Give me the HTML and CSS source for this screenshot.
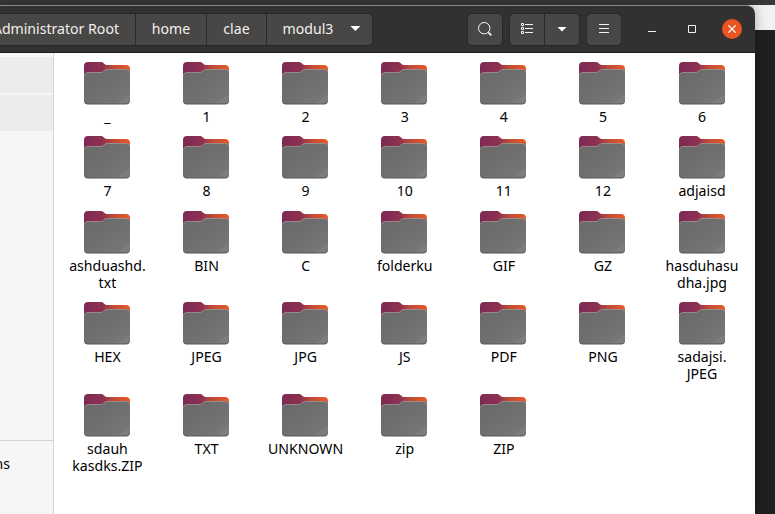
FILE: index.html
```
<!DOCTYPE html>
<html lang="en">
<head>
<meta charset="utf-8">
<title>modul3</title>
<link rel="stylesheet" href="styles.css">
</head>
<body>
<svg class="defs" aria-hidden="true">
  <defs>
    <linearGradient id="back" x1="0" y1="0" x2="1" y2="0">
      <stop offset="0" stop-color="#7c2a55"/><stop offset=".42" stop-color="#8f3150"/><stop offset=".62" stop-color="#bd4a38"/><stop offset="1" stop-color="#e95a26"/>
    </linearGradient>
    <linearGradient id="front" x1="0" y1="0" x2="1" y2="1">
      <stop offset="0" stop-color="#696969"/><stop offset=".5" stop-color="#6f6f6f"/><stop offset=".86" stop-color="#767676"/><stop offset=".87" stop-color="#7e7e7e"/><stop offset="1" stop-color="#7a7a7a"/>
    </linearGradient>
    <symbol id="folder" viewBox="0 0 46 43">
      <path fill="url(#back)" d="M4 0H17.500C19.500 0 20.500 3 22.500 3H42Q46 3 46 7V20H0V4Q0 0 4 0Z"/>
      <path fill="#555" d="M0 14.500Q0 10.500 4 10.500H17C19.500 10.500 20 7.500 23 7.500H42.500Q46 7.500 46 11V38.500Q46 42.500 42 42.500H4Q0 42.500 0 38.500Z"/>
      <path fill="url(#front)" d="M0 14.500Q0 10.500 4 10.500H17C19.500 10.500 20 7.500 23 7.500H42.500Q46 7.500 46 11V37.500Q46 41.500 42 41.500H4Q0 41.500 0 37.500Z"/>
      <path fill="none" stroke="#a39696" stroke-width=".8" d="M.4 13.500Q.8 10.500 4 10.500H17C19.500 10.500 20 7.500 23 7.500H42.500Q45.200 7.500 45.600 10"/>
    </symbol>
  </defs>
</svg>
<div class="window">
  <header class="titlebar">
    <nav class="path">
      <span class="crumb root">Administrator Root</span>
      <span class="crumb home">home</span>
      <span class="crumb clae">clae</span>
      <span class="crumb current">modul3 <i class="caret"></i></span>
    </nav>
    <div class="tools">
      <span class="button"><svg width="16" height="16" viewBox="0 0 16 16"><circle cx="7.200" cy="7.200" r="5.700"/><path stroke-width="1.800" d="M11.300 11.300L14.300 14.300"/></svg></span>
      <div class="group">
        <span class="button"><svg width="16" height="16" viewBox="0 0 16 16"><path d="M2.500 2.500h2v2h-2zM2.500 6.500h2v2h-2zM2.500 10.500h2v2h-2zM6 3.500h8M6 7.500h8M6 11.500h8"/></svg></span>
        <span class="button"><i class="caret"></i></span>
      </div>
      <span class="button"><svg width="16" height="16" viewBox="0 0 16 16"><path d="M3 3.500h10M3 7.500h10M3 11.500h10"/></svg></span>
    </div>
    <div class="controls">
      <svg width="20" height="20" viewBox="0 0 20 20"><path d="M6 12.500h8"/></svg>
      <svg width="20" height="20" viewBox="0 0 20 20"><path d="M6.500 6.500h7v7h-7z"/></svg>
      <svg class="close" width="20" height="20" viewBox="0 0 20 20"><path d="M6.300 6.300l7.400 7.400M13.700 6.300l-7.400 7.400"/></svg>
    </div>
  </header>
  <div class="content">
    <aside class="sidebar">
      <div class="place"></div>
      <div class="place"></div>
      <div class="other"><span>Other Locations</span></div>
    </aside>
    <main class="files">
      <div class="file"><svg><use href="#folder"/></svg><span>_</span></div>
      <div class="file"><svg><use href="#folder"/></svg><span>1</span></div>
      <div class="file"><svg><use href="#folder"/></svg><span>2</span></div>
      <div class="file"><svg><use href="#folder"/></svg><span>3</span></div>
      <div class="file"><svg><use href="#folder"/></svg><span>4</span></div>
      <div class="file"><svg><use href="#folder"/></svg><span>5</span></div>
      <div class="file"><svg><use href="#folder"/></svg><span>6</span></div>
      <div class="file"><svg><use href="#folder"/></svg><span>7</span></div>
      <div class="file"><svg><use href="#folder"/></svg><span>8</span></div>
      <div class="file"><svg><use href="#folder"/></svg><span>9</span></div>
      <div class="file"><svg><use href="#folder"/></svg><span>10</span></div>
      <div class="file"><svg><use href="#folder"/></svg><span>11</span></div>
      <div class="file"><svg><use href="#folder"/></svg><span>12</span></div>
      <div class="file"><svg><use href="#folder"/></svg><span>adjaisd</span></div>
      <div class="file"><svg><use href="#folder"/></svg><span>ashduashd.<br>txt</span></div>
      <div class="file"><svg><use href="#folder"/></svg><span>BIN</span></div>
      <div class="file"><svg><use href="#folder"/></svg><span>C</span></div>
      <div class="file"><svg><use href="#folder"/></svg><span>folderku</span></div>
      <div class="file"><svg><use href="#folder"/></svg><span>GIF</span></div>
      <div class="file"><svg><use href="#folder"/></svg><span>GZ</span></div>
      <div class="file"><svg><use href="#folder"/></svg><span>hasduhasu<br>dha.jpg</span></div>
      <div class="file"><svg><use href="#folder"/></svg><span>HEX</span></div>
      <div class="file"><svg><use href="#folder"/></svg><span>JPEG</span></div>
      <div class="file"><svg><use href="#folder"/></svg><span>JPG</span></div>
      <div class="file"><svg><use href="#folder"/></svg><span>JS</span></div>
      <div class="file"><svg><use href="#folder"/></svg><span>PDF</span></div>
      <div class="file"><svg><use href="#folder"/></svg><span>PNG</span></div>
      <div class="file"><svg><use href="#folder"/></svg><span>sadajsi.<br>JPEG</span></div>
      <div class="file"><svg><use href="#folder"/></svg><span>sdauh<br>kasdks.ZIP</span></div>
      <div class="file"><svg><use href="#folder"/></svg><span>TXT</span></div>
      <div class="file"><svg><use href="#folder"/></svg><span>UNKNOWN</span></div>
      <div class="file"><svg><use href="#folder"/></svg><span>zip</span></div>
      <div class="file"><svg><use href="#folder"/></svg><span>ZIP</span></div>
    </main>
  </div>
</div>
</body>
</html>
```
FILE: styles.css
```
* { box-sizing: border-box; }
body {
  margin: 0;
  width: 775px;
  height: 514px;
  padding-top: 5px;
  overflow: hidden;
  background: linear-gradient(#393837 5px, #f1f1f1 5px, #f1f1f1 30px, #1f1f1f 30px);
  font: 14.1px/17px "Noto Sans", "Open Sans", sans-serif;
  color: #000;
}
.defs { position: absolute; width: 0; height: 0; }
.window {
  width: 755px;
  height: 509px;
  border-radius: 0 8px 0 0;
  overflow: hidden;
  background: #fff;
  box-shadow: 0 0 12px rgba(0, 0, 0, .3);
}
.titlebar {
  display: flex;
  align-items: center;
  height: 48px;
  border-top: 1px solid #8b8987;
  border-bottom: 1px solid #1c1719;
  border-radius: 0 8px 0 0;
  background: #323030;
  color: #f1f0ee;
}
.path {
  display: flex;
  width: 373px;
  height: 33px;
  border: 1px solid #292727;
  border-left: 0;
  border-radius: 0 5px 5px 0;
  background: #484745;
  overflow: hidden;
}
.crumb {
  display: flex;
  align-items: center;
  justify-content: center;
  padding-bottom: 1px;
  border-right: 1px solid #2b2929;
  white-space: nowrap;
}
.root { width: 136px; justify-content: flex-end; padding-right: 16px; }
.home { width: 71px; }
.clae { width: 60px; }
.current { width: 105px; border: 0; gap: 17px; padding-left: 4px; }
.caret {
  width: 10px;
  height: 5px;
  background: #fff;
  clip-path: polygon(0 0, 100% 0, 50% 100%);
}
.tools { display: flex; gap: 6px; margin-left: 94px; }
.group { display: flex; }
.button {
  display: grid;
  place-items: center;
  width: 36px;
  height: 33px;
  border: 1px solid #292727;
  border-radius: 5px;
  background: #484745;
}
.group .button:first-child { border-radius: 5px 0 0 5px; }
.group .button:last-child { border-radius: 0 5px 5px 0; margin-left: -1px; }
.titlebar svg { fill: none; stroke: #f4f3f1; stroke-width: 1; }
.controls { display: flex; gap: 20px; margin-left: 20px; }
.controls .close { border-radius: 50%; background: #e95420; stroke-width: 1.3; }
.content { display: flex; height: 461px; }
.sidebar {
  display: flex;
  flex-direction: column;
  gap: 2px;
  width: 54px;
  padding-top: 4px;
  border-right: 1px solid #d3d3d3;
  background: #f6f6f6;
}
.place { height: 36px; background: #ececec; }
.other {
  display: flex;
  justify-content: flex-end;
  height: 74px;
  margin-top: auto;
  padding: 14px 43px 0 0;
  border-top: 1px solid #d3d3d3;
  white-space: nowrap;
}
.files {
  display: grid;
  grid-template-columns: repeat(7, 99.1px);
  grid-template-rows: 74px 75px 91px 92px 90px;
  padding: 9px 0 0 3.4px;
}
.file { display: flex; flex-direction: column; align-items: center; text-align: center; }
.file svg { flex: none; width: 46px; height: 43px; margin-bottom: 3px; }
.file span { padding-left: 1px; white-space: nowrap; }
```
